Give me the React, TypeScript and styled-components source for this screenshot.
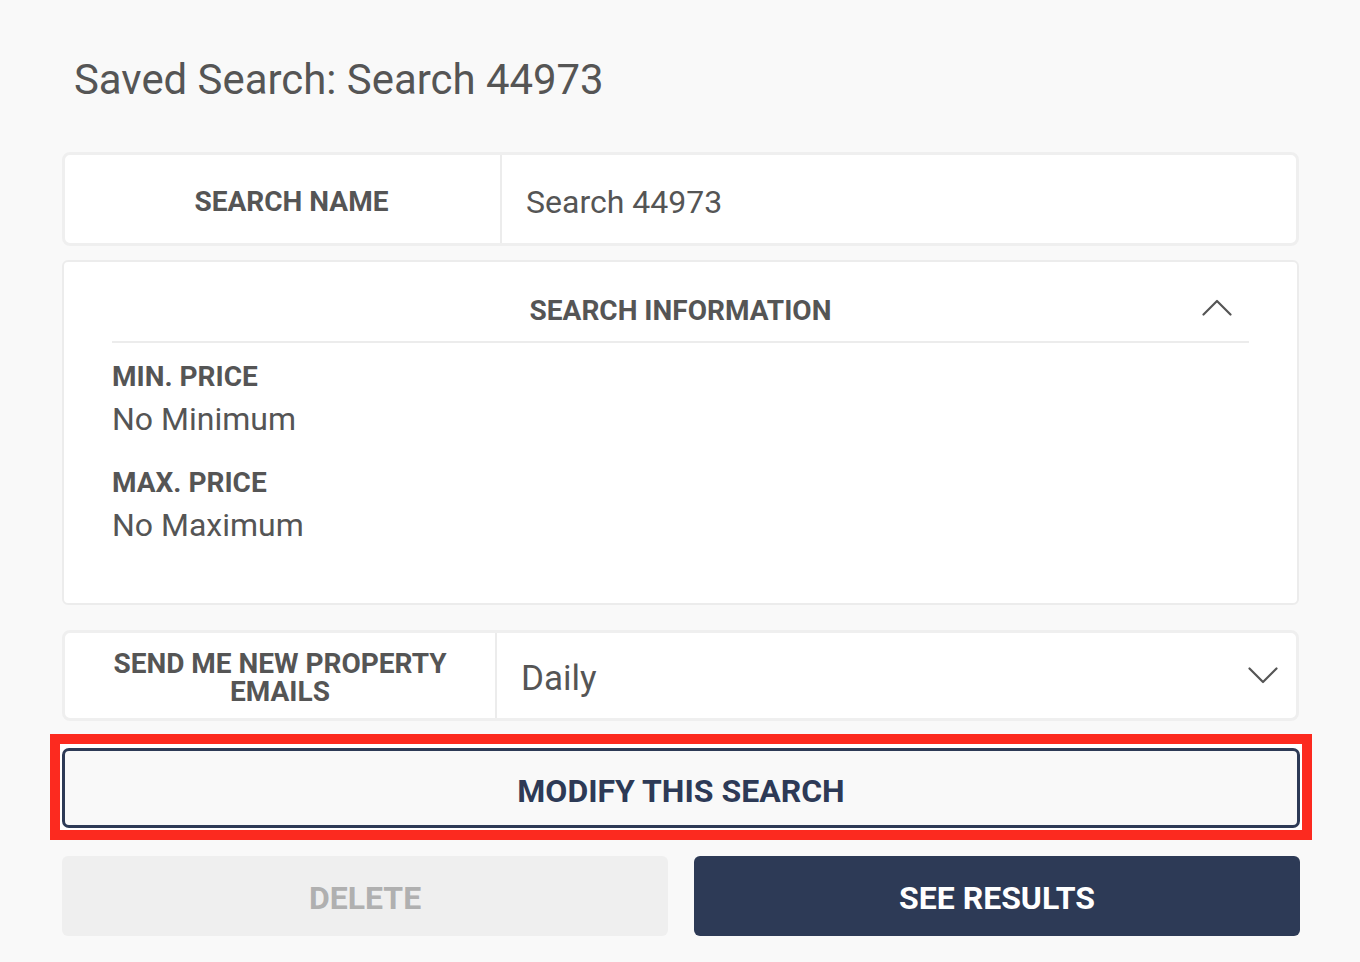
import styled, { createGlobalStyle } from "styled-components";

const GlobalStyle = createGlobalStyle`
  body {
    margin: 0;
    background: #f9f9f9;
    font-family: Roboto, "Liberation Sans", Arial, sans-serif;
    color: #555555;
  }
`;

const NAVY = "#2d3a56";

const Chevron: React.FC<{ up?: boolean }> = ({ up }) => (
  <svg width="30" height="17" viewBox="0 0 30 17" fill="none">
    <path
      d={up ? "M1.5 15.5 L15 2 L28.5 15.5" : "M1.5 1.5 L15 15 L28.5 1.5"}
      stroke="#555"
      strokeWidth="2.2"
      strokeLinecap="round"
      strokeLinejoin="round"
    />
  </svg>
);

const App: React.FC = () => {
  return (
    <>
      <GlobalStyle />
      <Page>
        <Title>Saved Search: Search 44973</Title>

        <RowCard height={94} labelWidth={437}>
          <RowLabel offset={18}>SEARCH NAME</RowLabel>
          <RowValue size={32}>
            <span>Search 44973</span>
          </RowValue>
        </RowCard>

        <InfoCard>
          <InfoHeader>
            <span />
            <HeaderTitle>SEARCH INFORMATION</HeaderTitle>
            <Toggle>
              <Chevron up />
            </Toggle>
          </InfoHeader>
          <Field>
            <FieldLabel>MIN. PRICE</FieldLabel>
            <FieldValue>No Minimum</FieldValue>
          </Field>
          <Field>
            <FieldLabel>MAX. PRICE</FieldLabel>
            <FieldValue>No Maximum</FieldValue>
          </Field>
        </InfoCard>

        <RowCard height={91} labelWidth={432} spaced>
          <RowLabel>
            SEND ME NEW PROPERTY
            <br />
            EMAILS
          </RowLabel>
          <RowValue size={35}>
            <span>Daily</span>
            <Chevron />
          </RowValue>
        </RowCard>

        <Highlight>
          <OutlineButton>MODIFY THIS SEARCH</OutlineButton>
        </Highlight>

        <Actions>
          <ActionButton variant="muted">DELETE</ActionButton>
          <ActionButton variant="primary">SEE RESULTS</ActionButton>
        </Actions>
      </Page>
    </>
  );
};

export default App;

const Page = styled.div`
  width: 1238px;
  margin-left: 62px;
  padding-bottom: 26px;
`;

const Title = styled.h1`
  margin: 0 0 48px;
  padding: 56px 0 0 12px;
  font-size: 41.9px;
  line-height: 48px;
  font-weight: 400;
  color: #555;
`;

const RowCard = styled.div<{ height: number; labelWidth: number; spaced?: boolean }>`
  box-sizing: border-box;
  display: grid;
  grid-template-columns: ${(p) => p.labelWidth}px 1fr;
  height: ${(p) => p.height}px;
  margin: ${(p) => (p.spaced ? "25px" : "0")} 1px 0 0;
  background: #fff;
  border: 3px solid #efefef;
  border-radius: 8px;
`;

const RowLabel = styled.div<{ offset?: number }>`
  display: flex;
  align-items: center;
  justify-content: center;
  padding: 5px 0 0 ${(p) => p.offset ?? 0}px;
  text-align: center;
  border-right: 2px solid #ececec;
  font-size: 28px;
  line-height: 28px;
  font-weight: 700;
  color: #555;
`;

const RowValue = styled.div<{ size: number }>`
  display: flex;
  align-items: center;
  justify-content: space-between;
  padding: 0 18px 0 24px;
  font-size: ${(p) => p.size}px;
  color: #555;

  span {
    padding-top: 5px;
  }
`;

const InfoCard = styled.div`
  box-sizing: border-box;
  height: 345px;
  margin: 14px 1px 0 0;
  padding: 0 48px;
  background: #fff;
  border: 2px solid #ececec;
  border-radius: 6px;
`;

const InfoHeader = styled.div`
  display: grid;
  grid-template-columns: 1fr auto 1fr;
  align-items: center;
  height: 81px;
  padding-top: 12px;
  box-sizing: border-box;
  border-bottom: 2px solid #ececec;
`;

const HeaderTitle = styled.div`
  padding-top: 6px;
  font-size: 28px;
  font-weight: 700;
  color: #555;
`;

const Toggle = styled.div`
  justify-self: end;
  display: flex;
  margin-right: 17px;
`;

const Field = styled.div`
  margin-top: 16px;

  & + & {
    margin-top: 26px;
  }
`;

const FieldLabel = styled.div`
  font-size: 28px;
  line-height: 36px;
  font-weight: 700;
  color: #555;
`;

const FieldValue = styled.div`
  margin-top: 4px;
  font-size: 32px;
  line-height: 40px;
  color: #555;
`;

const Highlight = styled.div`
  margin: 13px -12px 0;
  padding: 4px 2px 2px;
  background: #fff;
  border: 10px solid #fc2a1f;
`;

const OutlineButton = styled.button`
  display: block;
  box-sizing: border-box;
  width: 100%;
  height: 80px;
  padding-top: 6px;
  background: #f9f9f9;
  border: 3px solid ${NAVY};
  border-radius: 7px;
  font-family: inherit;
  font-size: 32px;
  font-weight: 700;
  color: ${NAVY};
  cursor: pointer;
`;

const Actions = styled.div`
  display: grid;
  grid-template-columns: 1fr 1fr;
  gap: 26px;
  margin-top: 16px;
`;

const ActionButton = styled.button<{ variant: "muted" | "primary" }>`
  height: 80px;
  padding-top: 5px;
  border: none;
  border-radius: 6px;
  background: ${(p) => (p.variant === "primary" ? NAVY : "#efefef")};
  color: ${(p) => (p.variant === "primary" ? "#fff" : "#b0b0b0")};
  font-family: inherit;
  font-size: 32px;
  font-weight: 700;
  cursor: pointer;
`;
